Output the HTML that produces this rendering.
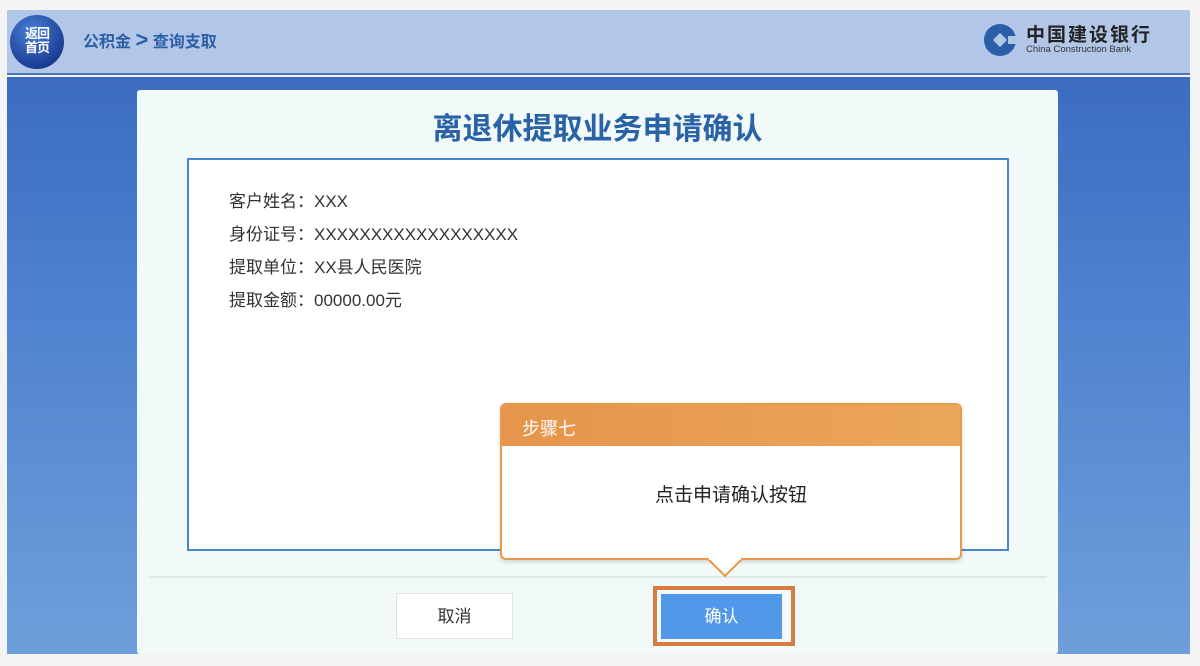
<!DOCTYPE html>
<html><head><meta charset="utf-8"><style>
*{margin:0;padding:0;box-sizing:border-box}
body{width:1200px;height:666px;background:#f4f4f4;position:relative;overflow:hidden;font-family:"Liberation Sans","Noto Sans CJK SC",sans-serif}
.hdr{position:absolute;left:7px;top:10px;width:1183px;height:65px;background:#b2c6e8;border-bottom:2px solid #4a78c4}
.main{position:absolute;left:7px;top:77px;width:1183px;height:577px;background:linear-gradient(180deg,#3b6cc2 0%,#4f82cf 40%,#6f9fda 100%)}
.back{position:absolute;left:3px;top:5px;width:54px;height:54px;border-radius:50%;background:radial-gradient(circle at 40% 30%,#4a7fd8,#1c3f94 70%,#142f78);color:#fff;font-size:13px;font-weight:bold;line-height:14px;text-align:center;padding-top:12px;letter-spacing:-1px}
.crumb{position:absolute;left:76px;top:17px;font-size:16px;font-weight:bold;color:#2b5fa6}
.logo{position:absolute;left:975px;top:12px}
.card{position:absolute;left:137px;top:90px;width:921px;height:564px;background:#f1f9f9;border-radius:3px}
.title{position:absolute;left:0;width:100%;top:14px;text-align:center;font-size:30px;font-weight:bold;color:#2a62a8}
.box{position:absolute;left:50px;top:68px;width:822px;height:393px;background:#fff;border:2px solid #4a86d0}
.rows{position:absolute;left:40px;top:25px;font-size:17px;color:#333;line-height:33px;white-space:nowrap}
.sep{position:absolute;left:12px;top:486px;width:898px;height:2px;background:#dfe6e6}
.btn{position:absolute;top:503px;width:117px;height:46px;font-size:17px;text-align:center;line-height:46px}
.tip{position:absolute;left:500px;top:403px;width:462px;height:157px;background:#fff;border:2px solid #e89a4a;border-radius:6px;box-shadow:0 2px 4px rgba(0,0,0,.15)}
.tiph{height:41px;background:linear-gradient(90deg,#e6954a,#eba65a);border-radius:4px 4px 0 0;color:#fff;font-size:18px;line-height:48px;padding-left:20px}
.tipb{text-align:center;font-size:19px;color:#222;margin-top:34px}
</style></head><body>
<div class="hdr">
 <div class="back">返回<br>首页</div>
 <div class="crumb">公积金 <span style="font-size:22px">&gt;</span> 查询支取</div>
 <div class="logo">
  <svg width="38" height="36" viewBox="0 0 38 36" style="position:absolute;left:0;top:0"><circle cx="18" cy="18" r="16" fill="#2a5ea8"/><rect x="13" y="13" width="10" height="10" transform="rotate(45 18 18)" fill="#b2c6e8"/><rect x="26" y="14" width="12" height="8" fill="#b2c6e8"/></svg>
  <div style="position:absolute;left:44px;top:-2px;font-size:19px;font-weight:bold;color:#222;white-space:nowrap;letter-spacing:2px">中国建设银行</div>
  <div style="position:absolute;left:44px;top:22px;font-size:9.5px;color:#333;white-space:nowrap">China Construction Bank</div>
 </div>
</div>
<div class="main"></div>
<div class="card">
 <div class="title">离退休提取业务申请确认</div>
 <div class="box"><div class="rows">客户姓名：XXX<br>身份证号：XXXXXXXXXXXXXXXXXX<br>提取单位：XX县人民医院<br>提取金额：00000.00元</div></div>
 <div class="sep"></div>
 <div class="btn" style="left:259px;background:#fff;border:1px solid #dde3e3;color:#333">取消</div>
 <div style="position:absolute;left:516px;top:496px;width:142px;height:60px;border:4px solid #d97b45"></div>
 <div class="btn" style="left:524px;top:504px;width:121px;height:45px;background:#5199e8;color:#fff">确认</div>
</div>
<div class="tip"><div class="tiph">步骤七</div><div class="tipb">点击申请确认按钮</div></div>
<svg style="position:absolute;left:706px;top:558px" width="40" height="20"><path d="M2 1 L19 18 L36 1" fill="#fff" stroke="#e89a4a" stroke-width="2"/><rect x="3" y="0" width="32" height="2" fill="#fff"/></svg>
</body></html>
